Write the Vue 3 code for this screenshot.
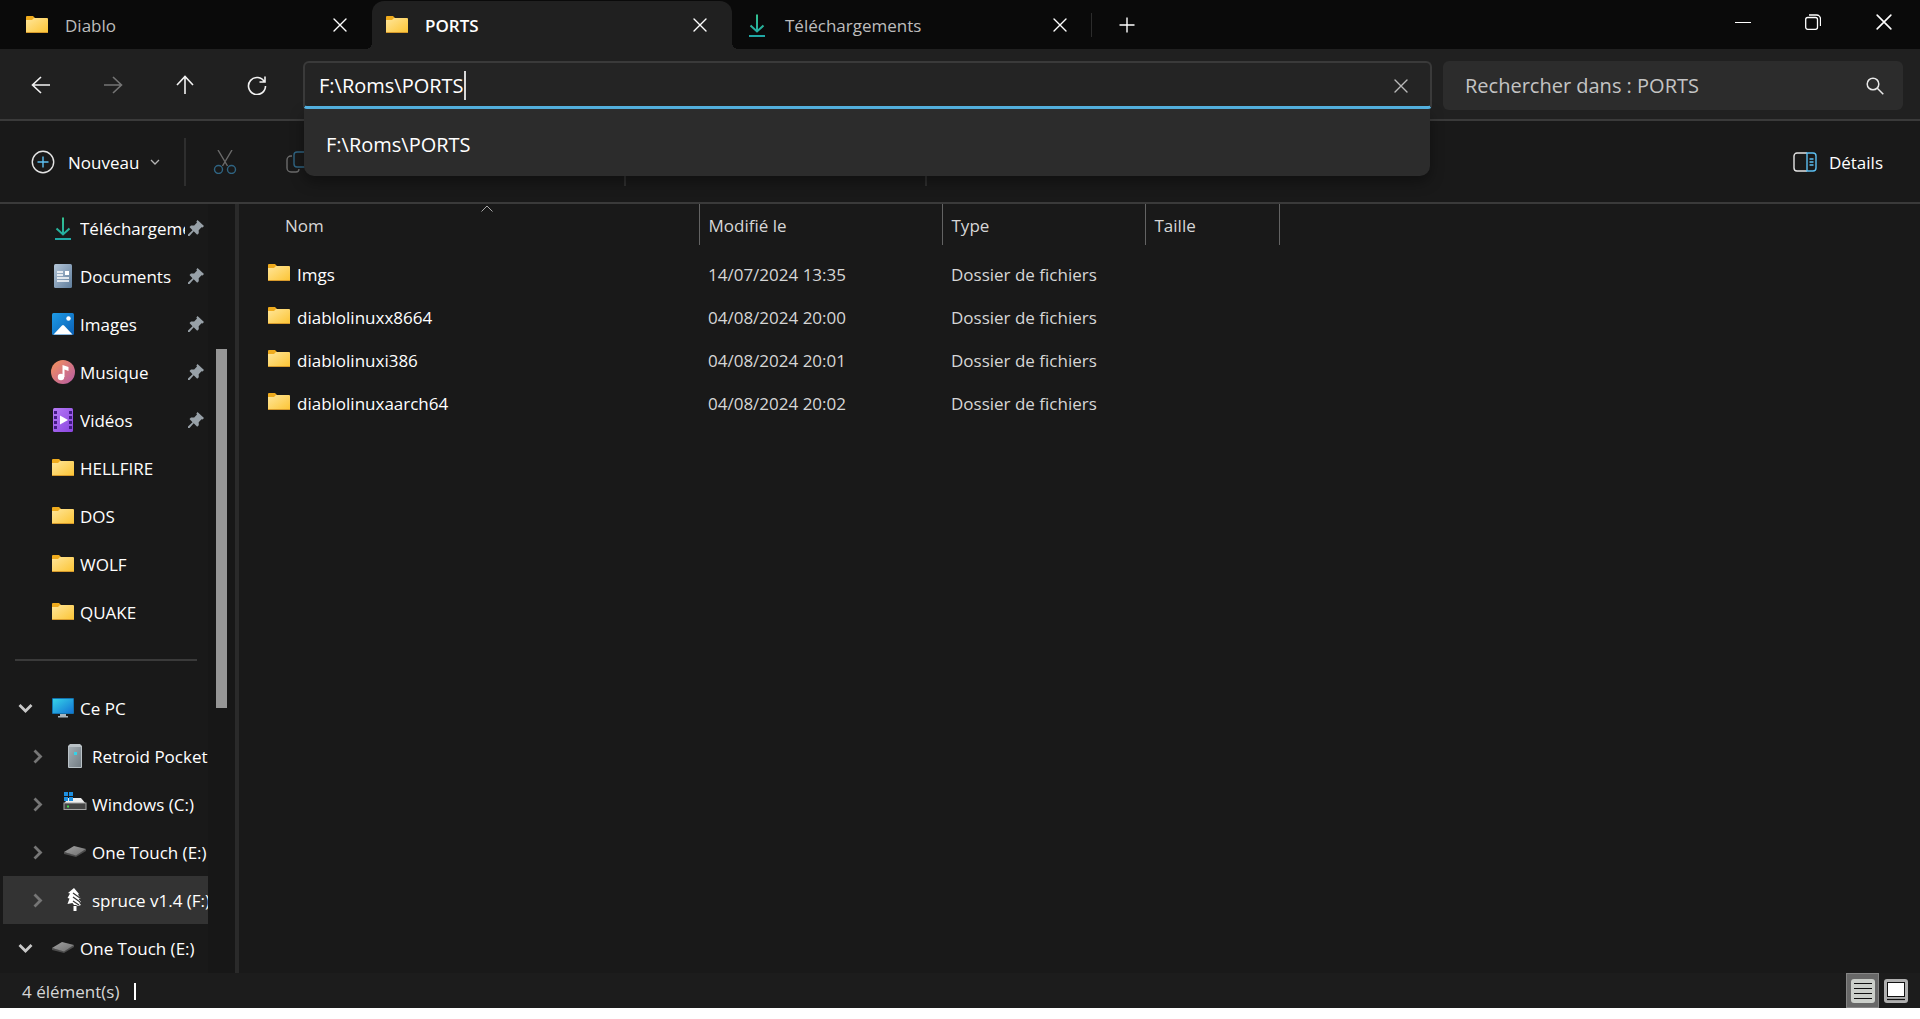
<script setup>
import { ref } from 'vue'

const tabs = [
  { label: 'Diablo', icon: 'folder', active: false },
  { label: 'PORTS', icon: 'folder', active: true },
  { label: 'Téléchargements', icon: 'download', active: false }
]

const address = ref('F:\\Roms\\PORTS')
const search = ref('')

const pinned = [
  { label: 'Téléchargements', icon: 'download', pin: true },
  { label: 'Documents', icon: 'document', pin: true },
  { label: 'Images', icon: 'image', pin: true },
  { label: 'Musique', icon: 'music', pin: true },
  { label: 'Vidéos', icon: 'video', pin: true },
  { label: 'HELLFIRE', icon: 'folder' },
  { label: 'DOS', icon: 'folder' },
  { label: 'WOLF', icon: 'folder' },
  { label: 'QUAKE', icon: 'folder' }
]

const devices = [
  { label: 'Ce PC', icon: 'pc', open: true },
  { label: 'Retroid Pocket', icon: 'device', child: true },
  { label: 'Windows (C:)', icon: 'windrive', child: true },
  { label: 'One Touch (E:)', icon: 'drive', child: true },
  { label: 'spruce v1.4 (F:)', icon: 'tree', child: true, selected: true },
  { label: 'One Touch (E:)', icon: 'drive', open: true }
]

const columns = [
  { label: 'Nom', key: 'name', sorted: true },
  { label: 'Modifié le', key: 'date' },
  { label: 'Type', key: 'type' },
  { label: 'Taille', key: 'size' }
]

const files = [
  { name: 'Imgs', date: '14/07/2024 13:35' },
  { name: 'diablolinuxx8664', date: '04/08/2024 20:00' },
  { name: 'diablolinuxi386', date: '04/08/2024 20:01' },
  { name: 'diablolinuxaarch64', date: '04/08/2024 20:02' }
]
</script>

<template>
  <svg class="sprite" aria-hidden="true">
    <defs>
      <linearGradient id="gFolder" x1="0" y1="0" x2="1" y2="1"><stop offset="0" stop-color="#ffe69a" /><stop offset="1" stop-color="#fcc433" /></linearGradient>
      <linearGradient id="gDown" gradientUnits="userSpaceOnUse" x1="12" y1="0" x2="12" y2="24"><stop offset="0" stop-color="#35c48f" /><stop offset="1" stop-color="#1fa6a6" /></linearGradient>
      <linearGradient id="gDoc" x1="0" y1="0" x2="1" y2="1"><stop offset="0" stop-color="#b4c6d8" /><stop offset="1" stop-color="#5f7d9c" /></linearGradient>
      <linearGradient id="gImg" x1="0" y1="0" x2="1" y2="1"><stop offset="0" stop-color="#1e9be6" /><stop offset="1" stop-color="#0a5fb4" /></linearGradient>
      <linearGradient id="gMus" x1="0" y1="0" x2="1" y2="1"><stop offset="0" stop-color="#f5935a" /><stop offset="1" stop-color="#b55aa5" /></linearGradient>
      <linearGradient id="gVid" x1="0" y1="0" x2="1" y2="1"><stop offset="0" stop-color="#b57af5" /><stop offset="1" stop-color="#8a45e0" /></linearGradient>
      <linearGradient id="gPc" x1="0" y1="0" x2="1" y2="1"><stop offset="0" stop-color="#35d2e8" /><stop offset="1" stop-color="#1474d4" /></linearGradient>
      <linearGradient id="gDev" x1="0" y1="0" x2="1" y2="1"><stop offset="0" stop-color="#a3adb3" /><stop offset="1" stop-color="#737d84" /></linearGradient>
      <linearGradient id="gDrive" x1="0" y1="0" x2="1" y2="1"><stop offset="0" stop-color="#a2a2a2" /><stop offset="1" stop-color="#6f6f6f" /></linearGradient>
    </defs>
    <symbol id="folder" viewBox="0 0 24 24">
      <path d="M1 4a1 1 0 0 1 1-1h6l2 2v4H1z" fill="#efab1d" />
      <path d="M1 7h6l2-2h13a1 1 0 0 1 1 1v13a1 1 0 0 1-1 1H2a1 1 0 0 1-1-1z" fill="url(#gFolder)" />
      <path d="M1 19.500h22" stroke="#d79a2c" />
    </symbol>
    <symbol id="download" viewBox="0 0 24 24">
      <path d="M12 1.500v17M5.500 12.500l6.500 6 6.500-6M4 23h16" fill="none" stroke="url(#gDown)" stroke-width="2" />
    </symbol>
    <symbol id="document" viewBox="0 0 24 24">
      <rect x="3" width="18" height="24" rx="1.500" fill="url(#gDoc)" />
      <path d="M6 8h6M6 11h6M6 14h12M6 17h12" stroke="#fff" stroke-width="1.300" />
      <rect x="14" y="7" width="4" height="4" fill="#fff" />
    </symbol>
    <symbol id="image" viewBox="0 0 24 24">
      <rect x="1" y="1" width="22" height="22" rx="1.500" fill="url(#gImg)" />
      <path d="M2.500 22.500 11 13.500q1-1 2 0l8.500 9z" fill="#fff" />
      <circle cx="17.500" cy="6.500" r="2.200" fill="#fff" />
    </symbol>
    <symbol id="music" viewBox="0 0 24 24">
      <circle cx="12" cy="12" r="12" fill="url(#gMus)" />
      <circle cx="10" cy="17" r="3.200" fill="#fff" />
      <path d="M11.500 17V5l6 2v4l-4-1.500V17z" fill="#fff" />
    </symbol>
    <symbol id="video" viewBox="0 0 24 24">
      <rect x="2" width="20" height="24" rx="1.500" fill="url(#gVid)" />
      <path d="M4.500 3v20M19.500 3v20" stroke="#431a86" stroke-width="3" stroke-dasharray="3 2" />
      <path d="M9 7.500v9l8-4.500z" fill="#fff" />
    </symbol>
    <symbol id="pc" viewBox="0 0 24 24">
      <path d="M9 18h6v2H9zM7 20h10v1.500H7z" fill="#a9b5bd" />
      <rect x="1" y="2" width="22" height="16" rx="1" fill="#1373b0" />
      <rect x="2" y="3" width="20" height="14" fill="url(#gPc)" />
    </symbol>
    <symbol id="device" viewBox="0 0 24 24">
      <path d="M7 0h10l2 2v21a1 1 0 0 1-1 1H6a1 1 0 0 1-1-1V2z" fill="#b9c1c6" />
      <path d="M6 3h12v20H6z" fill="url(#gDev)" />
      <rect x="11" y="8" width="3" height="3" fill="#35d2e8" />
    </symbol>
    <symbol id="windrive" viewBox="0 0 24 24">
      <path d="M5 6h13l5 6H1z" fill="#eeeeee" />
      <rect x="1" y="11" width="22" height="6.500" fill="#454545" stroke="#a5a5a5" />
      <rect x="4" y="13.500" width="2" height="2" fill="#41d64b" />
      <path d="M1 0h4v4H1zM6 0h4v4H6zM1 5h4v4H1zM6 5h4v4H6z" fill="#1d8fe0" />
    </symbol>
    <symbol id="drive" viewBox="0 0 24 24">
      <path d="M1 12v2l12 3v-2zM13 17l10-6v-2l-10 6z" fill="#4c4c4c" />
      <path d="M1 12 11 6l12 3-10 6.500z" fill="url(#gDrive)" />
    </symbol>
    <symbol id="tree" viewBox="0 0 24 24">
      <path d="M11 0 5 5l2 .5L4.500 10l2 .5L4.500 16l5-1L11 17h2l2 1 3-1-2-2.500 2-.5-2.500-3 2-.5-2.500-4 1-.5z" fill="#fff" />
      <path d="m10 5 7 5M10 9l7 5M10 13l6 4" stroke="#333" stroke-width="1.200" />
      <path d="M10.500 18h3v5h-3z" fill="#fff" />
    </symbol>
    <symbol id="pin" viewBox="0 0 16 16">
      <path d="m9.500 0 6.500 6-1.500 1.500-1-.2-2.800 2.900.1 3-1.600 1.500-3.500-3.400L1.500 16 0 16l0-1.500 4.500-4.300L1.500 7l1.500-1.600 3.200.1L9 2.500l-.6-1z" fill="#98a1a8" />
    </symbol>
    <symbol id="close" viewBox="0 0 14 14">
      <path d="m1 1 12 12M13 1 1 13" stroke="currentColor" stroke-width="1.400" stroke-linecap="round" />
    </symbol>
  </svg>

  <div class="window">
    <header class="tabbar">
      <div v-for="t in tabs" :key="t.label" class="tab" :class="{ active: t.active }">
        <svg class="ico"><use :href="'#' + t.icon" /></svg>
        <button class="tab-label">{{ t.label }}</button>
        <button class="tab-close" aria-label="Fermer l'onglet"><svg width="14" height="14"><use href="#close" /></svg></button>
      </div>
      <span class="tab-sep"></span>
      <button class="new-tab" aria-label="Nouvel onglet">
        <svg width="16" height="16" viewBox="0 0 16 16"><path d="M8 .5v15M.5 8h15" stroke="#fff" stroke-width="1.400" /></svg>
      </button>
      <div class="caption">
        <button aria-label="Réduire"><svg width="16" height="16" viewBox="0 0 16 16"><path d="M0 8.500h16" stroke="#fff" /></svg></button>
        <button aria-label="Restaurer">
          <svg width="16" height="16" viewBox="0 0 16 16" fill="none" stroke="#fff" stroke-width="1.300"><rect x=".7" y="3.500" width="11.800" height="11.800" rx="2" /><path d="M4 1h7.500a4 4 0 0 1 4 4v7" /></svg>
        </button>
        <button aria-label="Fermer"><svg width="16" height="16"><use href="#close" /></svg></button>
      </div>
    </header>

    <nav class="navbar">
      <button aria-label="Précédent"><svg width="20" height="20" viewBox="0 0 20 20"><path d="M10 2 1.500 10l8.500 8M1.500 10H19" /></svg></button>
      <button class="dim" aria-label="Suivant"><svg width="20" height="20" viewBox="0 0 20 20"><path d="m10 2 8.500 8-8.500 8M18.500 10H1" /></svg></button>
      <button aria-label="Dossier parent"><svg width="20" height="20" viewBox="0 0 20 20"><path d="m2 10 8-8.500 8 8.500M10 1.500V19" /></svg></button>
      <button aria-label="Actualiser"><svg width="20" height="20" viewBox="0 0 20 20"><path d="M17.500 7A8.500 8.500 0 1 0 18.500 11M18 1.500V7h-5.500" /></svg></button>
      <div class="address-wrap">
        <div class="address">
          <input v-model="address" class="address-input" aria-label="Adresse" spellcheck="false" />
          <span class="caret"></span>
          <button class="clear" aria-label="Effacer"><svg width="14" height="14"><use href="#close" /></svg></button>
        </div>
        <a class="suggest" href="#">F:\Roms\PORTS</a>
      </div>
      <label class="search">
        <input v-model="search" placeholder="Rechercher dans : PORTS" aria-label="Rechercher" />
        <svg width="18" height="18" viewBox="0 0 18 18" fill="none" stroke="#e8e8e8" stroke-width="1.500"><circle cx="7" cy="7" r="5.800" /><path d="m11.300 11.300 6 6" /></svg>
      </label>
    </nav>

    <div class="commands">
      <button class="cmd new">
        <svg width="24" height="24" viewBox="0 0 24 24" fill="none"><circle cx="12" cy="12" r="10.700" stroke="#e4e4e4" stroke-width="1.400" /><path d="M12 6.500v11M6.500 12h11" stroke="#5cc0f2" stroke-width="1.400" /></svg>
        <span class="text">Nouveau</span>
        <svg class="chev" width="10" height="6" viewBox="0 0 10 6" fill="none"><path d="m1 1 4 4 4-4" stroke="#b5b5b5" stroke-width="1.300" /></svg>
      </button>
      <span class="sep"></span>
      <button class="cmd cut" aria-label="Couper">
        <svg width="24" height="24" viewBox="0 0 24 24" fill="none" stroke-width="1.400"><path d="m5 0 9.500 16M19 0 9.500 16" stroke="#6b6b6b" /><circle cx="5.500" cy="19.500" r="4" stroke="#2f6482" /><circle cx="18.500" cy="19.500" r="4" stroke="#2f6482" /></svg>
      </button>
      <button class="cmd copy" aria-label="Copier">
        <svg width="24" height="24" viewBox="0 0 24 24" fill="none" stroke-width="1.400"><path d="M6 6H5a4 4 0 0 0-4 4v8a4 4 0 0 0 4 4h5q3 0 3-3" stroke="#6b6b6b" /><rect x="8" y="2" width="14" height="15" rx="3" stroke="#2f6482" /></svg>
      </button>
      <span class="sep sep-mid"></span>
      <span class="sep sep-end"></span>
      <button class="cmd details">
        <svg width="24" height="20" viewBox="0 0 24 20" fill="none" stroke-width="1.400"><path d="M14 1H4a3 3 0 0 0-3 3v12a3 3 0 0 0 3 3h10" stroke="#e4e4e4" /><path d="M14 1h6a3 3 0 0 1 3 3v12a3 3 0 0 1-3 3h-6zM16.500 7h4M16.500 10h4M16.500 13h4" stroke="#5cc0f2" /></svg>
        <span class="text">Détails</span>
      </button>
    </div>

    <main class="body">
      <aside class="side">
        <ul>
          <li v-for="i in pinned" :key="i.label">
            <span class="toggle"></span>
            <a href="#"><svg class="ico"><use :href="'#' + i.icon" /></svg><span class="label text">{{ i.label }}</span></a>
            <svg v-if="i.pin" class="pin"><use href="#pin" /></svg>
          </li>
        </ul>
        <hr />
        <ul>
          <li v-for="(i, n) in devices" :key="n" :class="{ child: i.child, selected: i.selected }">
            <button class="toggle" :class="{ open: i.open }" aria-label="Développer">
              <svg width="15" height="15" viewBox="0 0 15 15" fill="none" stroke="currentColor" stroke-width="2.800"><path :d="i.open ? 'm1.500 4 6 6 6-6' : 'm4.500 1.500 6 6-6 6'" /></svg>
            </button>
            <a href="#"><svg class="ico"><use :href="'#' + i.icon" /></svg><span class="label text">{{ i.label }}</span></a>
          </li>
        </ul>
      </aside>
      <div class="scroll"><div class="thumb"></div></div>
      <div class="splitter"></div>

      <section class="files">
        <table>
          <thead>
            <tr>
              <th v-for="c in columns" :key="c.key" :class="c.key" scope="col">
                {{ c.label }}
                <svg v-if="c.sorted" class="sort" width="12" height="7" viewBox="0 0 12 7" fill="none"><path d="m.5 6.500 5.500-5.500 5.500 5.500" stroke="#a8a8a8" /></svg>
              </th>
            </tr>
          </thead>
          <tbody>
            <tr v-for="f in files" :key="f.name">
              <td><a class="file" href="#"><svg class="ico"><use href="#folder" /></svg>{{ f.name }}</a></td>
              <td>{{ f.date }}</td>
              <td>Dossier de fichiers</td>
              <td></td>
            </tr>
          </tbody>
        </table>
      </section>
    </main>

    <footer class="status">
      <span>4 élément(s)</span>
      <span class="bar"></span>
      <div class="views">
        <button class="on" aria-label="Affichage en détails">
          <svg width="24" height="24" viewBox="0 0 24 24"><rect width="24" height="24" rx="3" fill="#cbcfca" /><path d="M3 4.500h18M3 9.500h18M3 14.500h18M3 19.500h18" stroke="#111" stroke-width="1.200" /></svg>
        </button>
        <button aria-label="Grandes icônes">
          <svg width="24" height="24" viewBox="0 0 24 24"><rect width="24" height="24" rx="3" fill="#b0b0b0" /><rect x="3.500" y="3.500" width="17" height="14" fill="#fff" stroke="#111" /><path d="M3 20.500h18" stroke="#111" stroke-width="1.200" /></svg>
        </button>
      </div>
    </footer>
  </div>
</template>

<style>
body {
  margin: 0;
  background: #fff;
}
</style>

<style scoped>
.window {
  display: flex;
  flex-direction: column;
  min-height: calc(100vh - 11px);
  margin-bottom: 11px;
  background: #191919;
  color: #fff;
  font: 17px/24px "Open Sans", "Noto Sans", sans-serif;
}
.window *,
.window *::before,
.window *::after {
  box-sizing: border-box;
}
.sprite {
  position: absolute;
  width: 0;
  height: 0;
}
button {
  display: flex;
  align-items: center;
  justify-content: center;
  padding: 0;
  border: 0;
  background: none;
  color: inherit;
  font: inherit;
}
a {
  color: inherit;
  text-decoration: none;
}
input {
  padding: 0;
  border: 0;
  outline: 0;
  background: none;
  color: inherit;
  font: inherit;
}
svg {
  flex: none;
}
.ico {
  width: 24px;
  height: 24px;
}
.text {
  padding-top: 2px;
}

/* Tab bar */
.tabbar {
  display: flex;
  height: 49px;
  padding: 1px 0 0 12px;
  background: #0a0a0a;
}
.tab {
  display: flex;
  align-items: center;
  width: 360px;
  padding: 0 25px 0 13px;
  color: #bdbdbd;
}
.tab.active {
  position: relative;
  border-radius: 12px 12px 0 0;
  background: #202020;
  color: #fff;
  font-weight: 600;
}
.tab.active::before,
.tab.active::after {
  content: "";
  position: absolute;
  bottom: 0;
  width: 6px;
  height: 6px;
}
.tab.active::before {
  right: 100%;
  background: radial-gradient(circle at 0 0, transparent 6px, #202020 6px);
}
.tab.active::after {
  left: 100%;
  background: radial-gradient(circle at 100% 0, transparent 6px, #202020 6px);
}
.tab-label {
  flex: 1;
  justify-content: flex-start;
  padding: 2px 0 0 16px;
}
.tab-close {
  color: #fff;
}
.tab-sep {
  width: 1px;
  height: 24px;
  margin: 12px 0 0 -1px;
  background: #2c2c2c;
}
.new-tab {
  width: 70px;
}
.caption {
  display: flex;
  height: 42px;
  margin-left: auto;
}
.caption button {
  width: 70px;
}
.caption button:last-child {
  width: 72px;
}

/* Navigation bar */
.navbar {
  display: flex;
  align-items: center;
  height: 72px;
  padding: 2px 17px 0 5px;
  border-bottom: 2px solid #3a3a3a;
  background: #202020;
  font-size: 20px;
}
.navbar > button {
  width: 72px;
  height: 48px;
}
.navbar > button path {
  fill: none;
  stroke: #f2f2f2;
  stroke-width: 1.6;
}
.navbar > button.dim {
  opacity: 0.4;
}
.address-wrap {
  position: relative;
  flex: 1;
  margin: 0 11px 0 10px;
}
.address {
  display: flex;
  align-items: center;
  height: 48px;
  padding: 2px 22px 0 14px;
  border: 2px solid #3a3a3a;
  border-bottom: 3px solid #56b6e6;
  border-radius: 6px 6px 4px 4px;
  background: #242424;
}
.address-input {
  field-sizing: content;
  height: 30px;
}
.caret {
  width: 2px;
  height: 29px;
  background: #d8d8d8;
}
.clear {
  margin-left: auto;
  color: #b9b9b9;
}
.suggest {
  position: absolute;
  z-index: 2;
  top: 100%;
  left: 1px;
  right: 2px;
  display: flex;
  align-items: center;
  height: 67px;
  padding: 4px 22px 0;
  border-radius: 0 0 10px 10px;
  background: #2c2c2c;
  box-shadow: 0 6px 14px rgba(0, 0, 0, 0.35);
}
.search {
  display: flex;
  flex: 0 1 460px;
  align-items: center;
  height: 49px;
  padding: 1px 19px 0 22px;
  border-radius: 6px;
  background: #2c2c2c;
}
.search input {
  flex: 1;
  min-width: 0;
  height: 30px;
}
.search input::placeholder {
  color: #c4c4c4;
  opacity: 1;
}

/* Command bar */
.commands {
  display: flex;
  align-items: center;
  height: 83px;
  padding: 0 37px 0 31px;
  border-bottom: 2px solid #3a3a3a;
  background: #191919;
}
.new {
  gap: 13px;
}
.chev {
  margin-left: -2px;
}
.sep {
  width: 2px;
  height: 48px;
  margin-left: 24px;
  background: #2e2e2e;
}
.cut {
  margin-left: 27px;
}
.copy {
  margin-left: 49px;
}
.sep-mid {
  margin-left: 314px;
}
.sep-end {
  margin-left: 299px;
}
.details {
  gap: 12px;
  margin-left: auto;
}

/* Main area */
.body {
  display: flex;
  flex: 1;
}
.side {
  width: 208px;
  padding-left: 3px;
  overflow: hidden;
}
ul {
  margin: 0;
  padding: 0;
  list-style: none;
}
li {
  display: flex;
  align-items: center;
  height: 48px;
  padding-left: 15px;
}
li.child {
  padding-left: 27px;
}
li.selected {
  background: #333;
}
.toggle {
  flex: none;
  width: 15px;
  margin-right: 18px;
  color: #767676;
}
.toggle.open {
  color: #c8c8c8;
}
li a {
  display: flex;
  flex: 1;
  align-items: center;
  gap: 5px;
  min-width: 0;
}
.label {
  flex: 1;
  min-width: 0;
  overflow: hidden;
  white-space: nowrap;
}
.pin {
  width: 16px;
  height: 16px;
  margin: 0 4px 0 3px;
}
hr {
  height: 2px;
  margin: 23px 11px 23px 12px;
  border: 0;
  background: #3a3a3a;
}
.scroll {
  width: 27px;
  padding: 145px 8px 0;
  background: #171717;
}
.thumb {
  height: 359px;
  background: #969696;
}
.splitter {
  width: 4px;
  background: #2a2a2a;
}
.files {
  flex: 1;
}
table {
  width: 1041px;
  border-collapse: collapse;
  table-layout: fixed;
  color: #d6d6d6;
}
th {
  position: relative;
  height: 41px;
  padding: 2px 0 0 9px;
  border-right: 1px solid #636363;
  font-weight: 400;
  text-align: left;
}
th.name {
  width: 460px;
  padding-left: 46px;
}
th.date {
  width: 243px;
}
th.type {
  width: 203px;
}
.sort {
  position: absolute;
  top: 1px;
  left: calc(50% + 12px);
}
tbody::before {
  content: "";
  display: block;
  height: 8px;
}
td {
  height: 43px;
  padding: 0 0 0 9px;
  white-space: nowrap;
}
td:first-child {
  padding-left: 28px;
}
.file {
  display: flex;
  align-items: center;
  gap: 6px;
  color: #fff;
}
.file .ico {
  margin-bottom: 4px;
}

/* Status bar */
.status {
  display: flex;
  align-items: center;
  height: 35px;
  padding: 2px 8px 0 22px;
  background: #1c1c1c;
  color: #d6d6d6;
}
.bar {
  width: 2px;
  height: 17px;
  margin-left: 15px;
  background: #fff;
}
.views {
  display: flex;
  height: 35px;
  margin: -2px 0 0 auto;
}
.views button {
  width: 33px;
}
.views .on {
  border: 1px solid #858585;
  background: #686868;
}
</style>
